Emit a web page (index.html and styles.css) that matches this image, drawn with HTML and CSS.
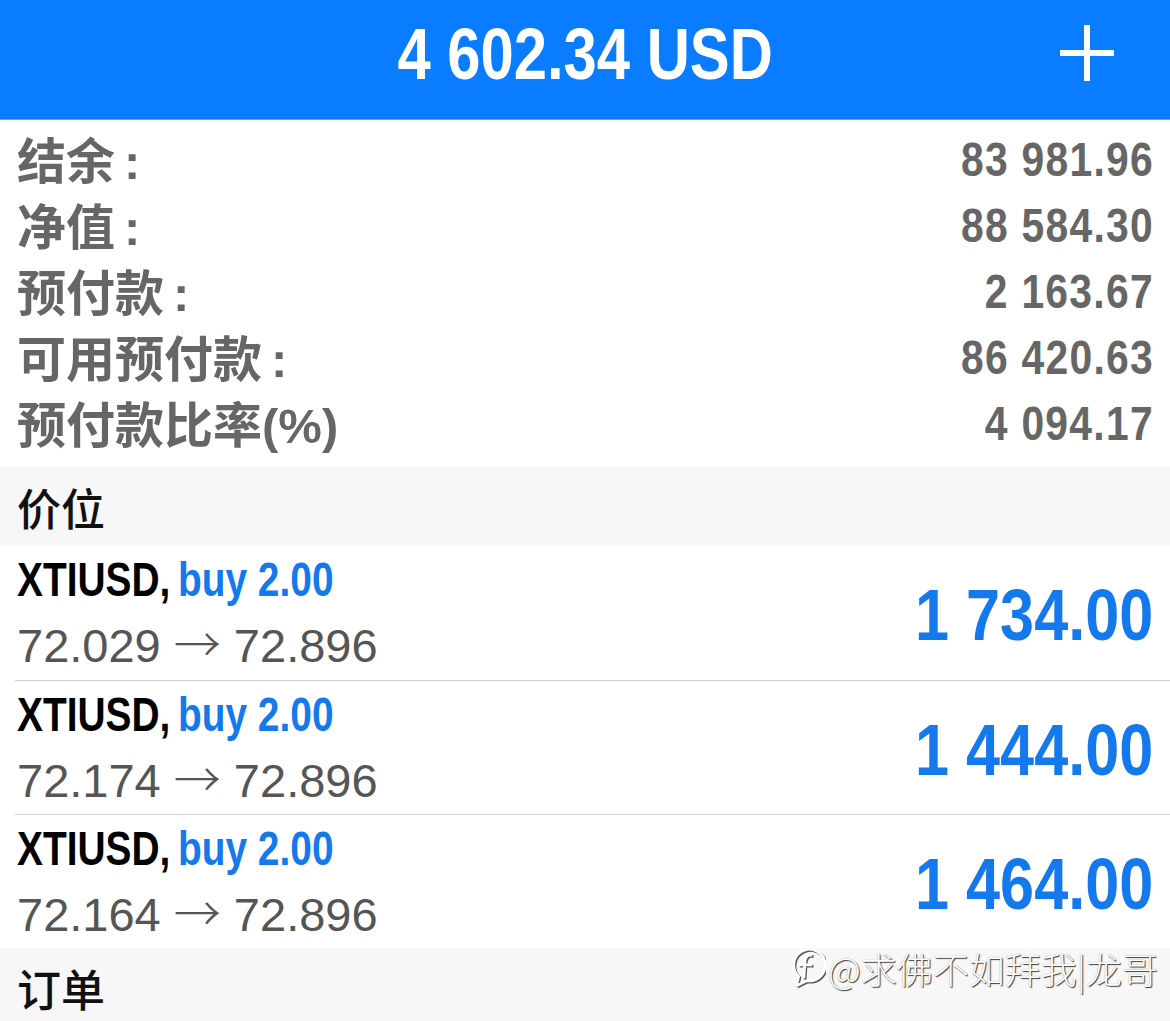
FILE: index.html
```html
<!DOCTYPE html>
<html lang="zh">
<head>
<meta charset="utf-8">
<title>账户</title>
<link rel="stylesheet" href="styles.css">
</head>
<body>
<div class="page">
  <header class="topbar">
    <div class="title">4 602.34 USD</div>
    <svg class="plus" width="56" height="56" viewBox="0 0 56 56">
      <rect x="24" y="0" width="6" height="56" fill="#fff"/>
      <rect x="0" y="25" width="54" height="6" fill="#fff"/>
    </svg>
  </header>

  <section class="summary">
    <div class="srow"><span class="label">结余<span class="colon">:</span></span><span class="value">83 981.96</span></div>
    <div class="srow"><span class="label">净值<span class="colon">:</span></span><span class="value">88 584.30</span></div>
    <div class="srow"><span class="label">预付款<span class="colon">:</span></span><span class="value">2 163.67</span></div>
    <div class="srow"><span class="label">可用预付款<span class="colon">:</span></span><span class="value">86 420.63</span></div>
    <div class="srow"><span class="label">预付款比率(%)</span><span class="value">4 094.17</span></div>
  </section>

  <div class="section-head">价位</div>

  <div class="positions">
    <div class="prow">
      <div class="pinfo">
        <div class="pline1"><span class="sym">XTIUSD,</span> <span class="side">buy 2.00</span></div>
        <div class="pline2">72.029 <span class="arrow">→</span> 72.896</div>
      </div>
      <div class="profit">1 734.00</div>
    </div>
    <div class="prow">
      <div class="pinfo">
        <div class="pline1"><span class="sym">XTIUSD,</span> <span class="side">buy 2.00</span></div>
        <div class="pline2">72.174 <span class="arrow">→</span> 72.896</div>
      </div>
      <div class="profit">1 444.00</div>
    </div>
    <div class="prow">
      <div class="pinfo">
        <div class="pline1"><span class="sym">XTIUSD,</span> <span class="side">buy 2.00</span></div>
        <div class="pline2">72.164 <span class="arrow">→</span> 72.896</div>
      </div>
      <div class="profit">1 464.00</div>
    </div>
  </div>

  <div class="section-head">订单</div>

  <div class="watermark">
    <svg class="wm-logo" width="38" height="42" viewBox="0 0 36 40">
      <g fill="none" stroke="#222" stroke-width="2.6" transform="translate(1.2,1.2)" opacity="0.75">
        <path d="M8 37 L10 28 A15 15 0 1 1 18 32 L8 37"/>
        <path d="M23 8 C18 7 16 10 16 15 L15 30 M10 17 L23 17"/>
      </g>
      <g fill="none" stroke="#fff" stroke-width="2.6">
        <path d="M8 37 L10 28 A15 15 0 1 1 18 32 L8 37"/>
        <path d="M23 8 C18 7 16 10 16 15 L15 30 M10 17 L23 17"/>
      </g>
    </svg>
    <span class="wm-text">@求佛不如拜我|龙哥</span>
  </div>
</div>
</body>
</html>
```
FILE: styles.css
```css
html, body {
  margin: 0;
  padding: 0;
  background: #ffffff;
}
.page {
  position: relative;
  width: 1170px;
  height: 1021px;
  overflow: hidden;
  font-family: "Liberation Sans", "Noto Sans CJK SC", sans-serif;
}
.topbar {
  position: relative;
  height: 119px;
  background: #0a7cff;
  border-bottom: 1px solid #5aa8ff;
  display: flex;
  align-items: center;
  justify-content: center;
}
.title {
  display: inline-block;
  font-family: "Liberation Sans", sans-serif;
  font-weight: 700;
  font-size: 72px;
  color: #ffffff;
  line-height: 1;
  padding-bottom: 12px;
  transform: scaleX(0.83);
  transform-origin: center;
}
.plus {
  position: absolute;
  right: 54px;
  top: 25px;
}
.summary {
  padding: 7px 17px 10px 17px;
}
.srow {
  height: 66px;
  display: flex;
  align-items: center;
  justify-content: space-between;
  color: #666666;
}
.label {
  font-family: "Liberation Sans", "Noto Sans CJK SC", sans-serif;
  font-weight: 700;
  font-size: 49px;
  margin-bottom: 6px;
}
.colon {
  padding-left: 9px;
}
.value {
  display: inline-block;
  font-family: "Liberation Sans", sans-serif;
  font-weight: 700;
  font-size: 48px;
  letter-spacing: 1.5px;
  transform: scaleX(0.85);
  transform-origin: right center;
  margin-right: -1px;
  margin-bottom: 2px;
}
.section-head {
  height: 79px;
  background: #f7f7f7;
  display: flex;
  align-items: center;
  padding-left: 17px;
  font-family: "Noto Sans CJK SC", sans-serif;
  font-weight: 500;
  font-size: 44px;
  color: #111111;
}
.positions {
  display: flex;
  flex-direction: column;
}
.prow {
  height: 134px;
  box-sizing: border-box;
  display: flex;
  align-items: center;
  justify-content: space-between;
  padding: 0 17px;
}
.prow + .prow {
  border-top: 1px solid #cfcfcf;
  margin-left: 15px;
  padding-left: 2px;
}
.pinfo {
  display: flex;
  flex-direction: column;
  align-items: flex-start;
}
.pline1 {
  display: inline-block;
  font-family: "Liberation Sans", sans-serif;
  font-weight: 700;
  font-size: 48px;
  line-height: 62px;
  white-space: nowrap;
  transform: scaleX(0.81);
  transform-origin: left center;
  word-spacing: -4px;
}
.sym {
  color: #000000;
}
.side {
  color: #1479ec;
  word-spacing: 0;
}
.pline2 {
  font-family: "Liberation Sans", sans-serif;
  font-weight: 400;
  font-size: 47px;
  line-height: 62px;
  color: #555555;
  white-space: nowrap;
}
.arrow {
  font-family: "Noto Sans CJK SC", sans-serif;
  font-weight: 300;
}
.profit {
  display: inline-block;
  font-family: "Liberation Sans", sans-serif;
  font-weight: 700;
  font-size: 72px;
  color: #1479ec;
  padding-top: 4px;
  transform: scaleX(0.85);
  transform-origin: right center;
}
.watermark {
  position: absolute;
  right: 12px;
  top: 942px;
  display: flex;
  align-items: center;
  gap: 2px;
}
.wm-text {
  font-family: "Noto Sans CJK SC", sans-serif;
  font-weight: 300;
  font-size: 36px;
  color: #ffffff;
  text-shadow: 1px 1px 1px rgba(0, 0, 0, 0.75), 0 0 1px rgba(0, 0, 0, 0.4);
}
```
